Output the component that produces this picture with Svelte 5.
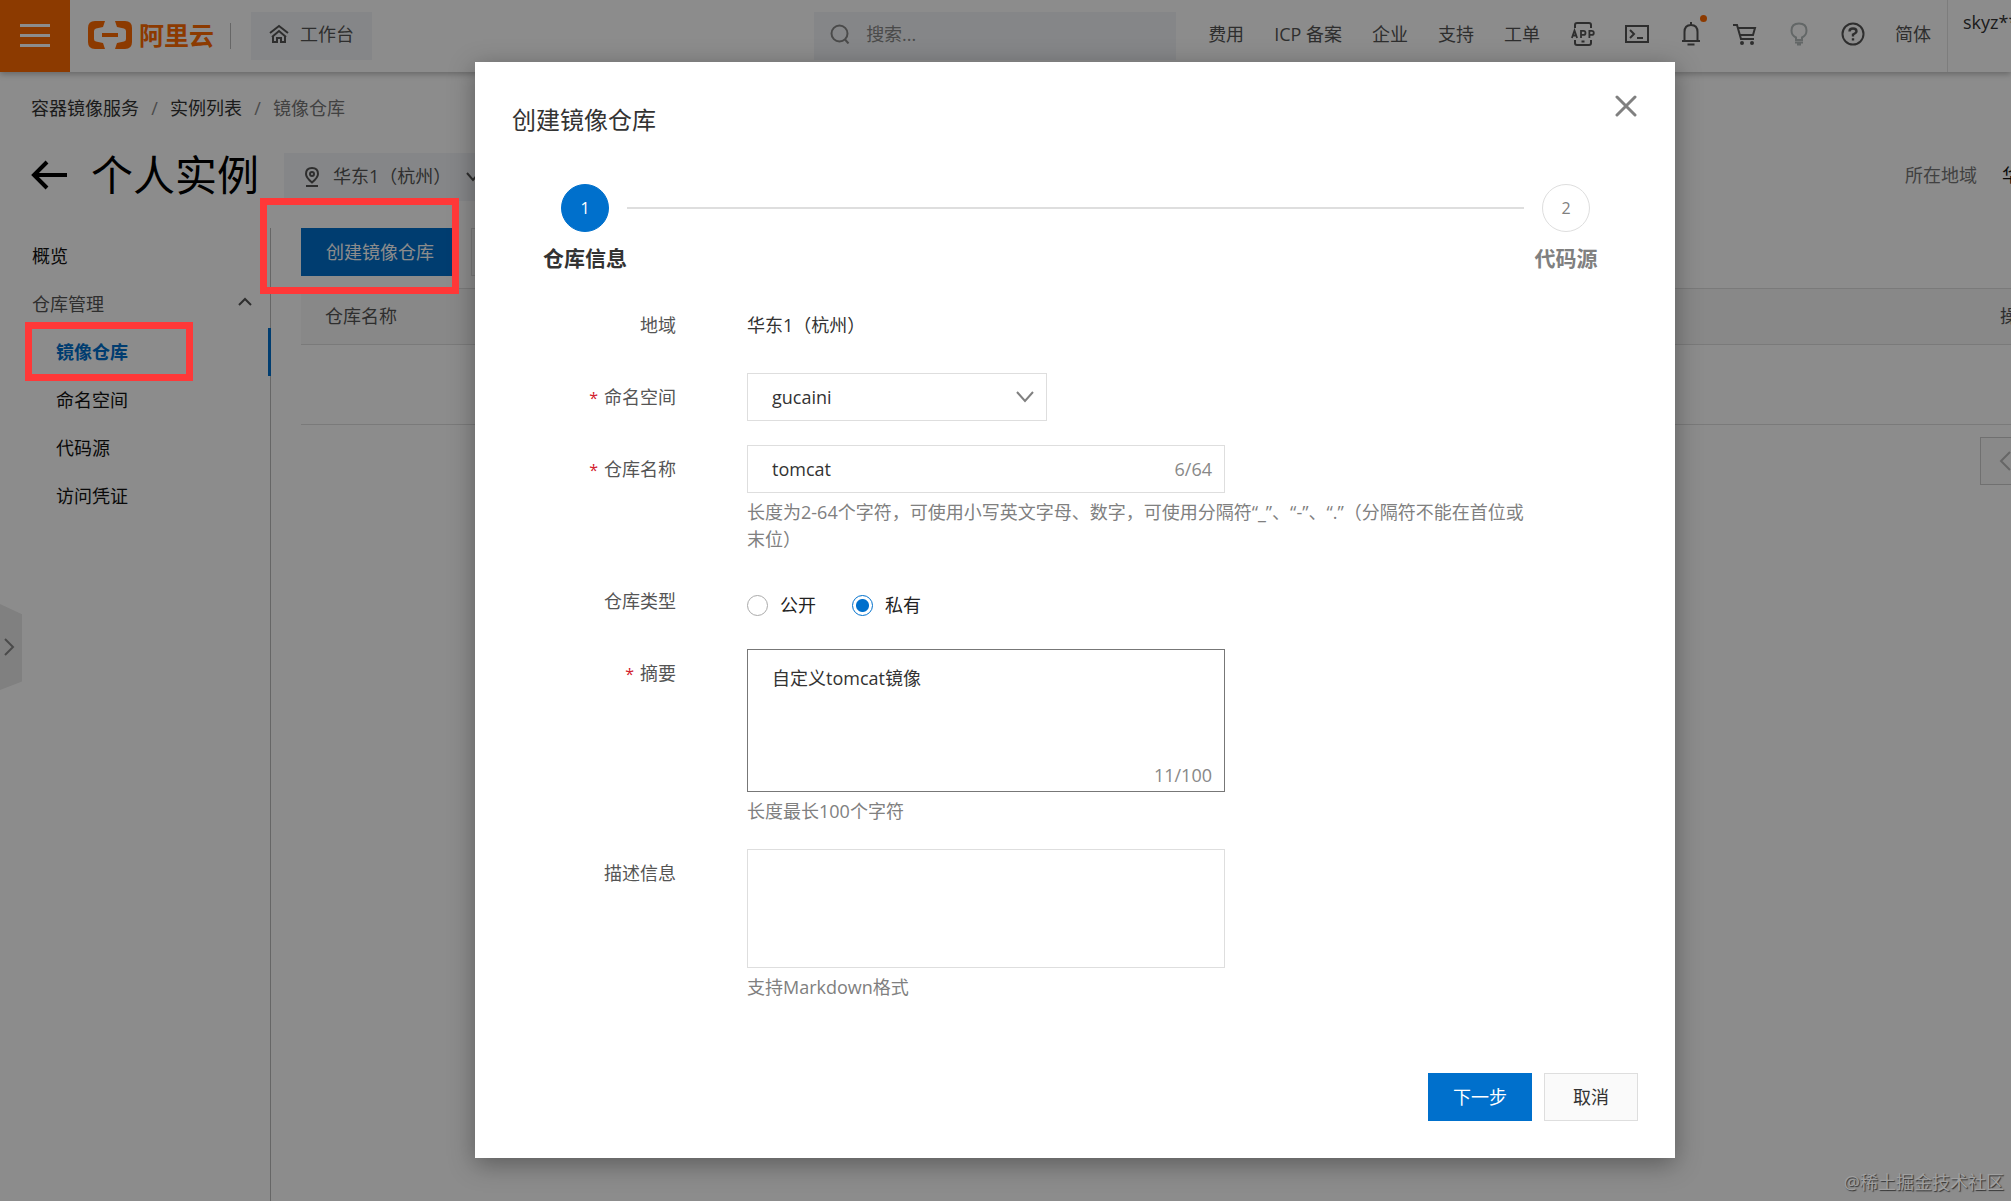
<script lang="ts">
  let namespace = $state('gucaini');
  let repoName = $state('tomcat');
  let repoType = $state('private');
  let summary = $state('自定义tomcat镜像');
  let description = $state('');

  const topLinks = ['费用', 'ICP 备案', '企业', '支持', '工单'];
  const subMenu = ['镜像仓库', '命名空间', '代码源', '访问凭证'];
</script>

<div class="screen">
  <header class="topbar">
    <button class="menu" aria-label="菜单"><i></i><i></i><i></i></button>
    <a class="logo" href="#home">
      <svg width="44" height="28" viewBox="0 0 44 28" fill="currentColor" aria-hidden="true">
        <path d="M17 0H7Q0 0 0 7V21Q0 28 7 28H17L15 22L8 20.500Q6 20 6 18V10Q6 8 8 7.500L15 6Z" />
        <path d="M27 0H37Q44 0 44 7V21Q44 28 37 28H27L29 22L36 20.500Q38 20 38 18V10Q38 8 36 7.500L29 6Z" />
        <rect x="14" y="12" width="16" height="4" />
      </svg>
      <span>阿里云</span>
    </a>
    <span class="bar"></span>
    <button class="workbench">
      <svg width="20" height="20" viewBox="0 0 20 20" fill="none" stroke="currentColor" stroke-width="2" aria-hidden="true">
        <path d="M1 9L10 2L19 9" /><path d="M3 13L10 7L17 13" /><path d="M4 12V18H8V14H12V18H16V12" />
      </svg>
      工作台
    </button>
    <label class="search">
      <svg width="20" height="20" viewBox="0 0 20 20" fill="none" stroke="currentColor" stroke-width="2" aria-hidden="true">
        <circle cx="9.500" cy="9.500" r="8" /><path d="M15 15.500L18.500 19.500" />
      </svg>
      <input type="search" placeholder="搜索..." aria-label="搜索" />
    </label>
    <nav class="toplinks">
      {#each topLinks as link}
        <a href="#{link}">{link}</a>
      {/each}
    </nav>
    <div class="tools">
      <button aria-label="APP">
        <svg width="24" height="26" viewBox="0 0 24 26" fill="none" stroke="currentColor" stroke-width="2">
          <path d="M4 7V4Q4 2 6 2H18Q20 2 20 4V7M4 19V22Q4 24 6 24H18Q20 24 20 22V19M10.500 20.500H13.500" />
          <path stroke-width="1.800" d="M0.900 17L3.500 9.500L6.100 17M2 14.500H5M10 17V9.900H12.500Q14.500 9.900 14.500 11.900T12.500 13.900H10M18.400 17V9.900H20.600Q22.800 9.900 22.800 11.900T20.600 13.900H18.400" />
        </svg>
      </button>
      <button aria-label="Cloud Shell">
        <svg width="24" height="26" viewBox="0 0 24 26" fill="none" stroke="currentColor" stroke-width="2">
          <rect x="1" y="5" width="22" height="16" /><path d="M5 9L9 13L5 17M12 17H18" />
        </svg>
      </button>
      <button class="bell" aria-label="消息">
        <svg width="24" height="26" viewBox="0 0 24 26" fill="none" stroke="currentColor" stroke-width="2">
          <path d="M12 1V4M3 20H21M5.500 19V11Q5.500 4 12 4T18.500 11V19M8.500 23.500H15.500" />
        </svg>
        <span class="dot"></span>
      </button>
      <button aria-label="购物车">
        <svg width="24" height="26" viewBox="0 0 24 26" fill="none" stroke="currentColor" stroke-width="2">
          <path d="M0 4H4L8 18H21M5 7H22L20 14H7" />
          <circle cx="9" cy="22" r="1" /><circle cx="19" cy="22" r="1" />
        </svg>
      </button>
      <button class="bulb" aria-label="提示">
        <svg width="24" height="26" viewBox="0 0 24 26" fill="none" stroke="currentColor" stroke-width="2">
          <path d="M9 19V16.500Q4.500 14.500 4.500 9.500Q4.500 2.500 12 2.500T19.500 9.500Q19.500 14.500 15 16.500V19ZM8 21.500H16M10 23.500H14" />
        </svg>
      </button>
      <button aria-label="帮助">
        <svg width="24" height="26" viewBox="0 0 24 26" fill="none" stroke="currentColor" stroke-width="2">
          <circle cx="12" cy="13" r="10.500" /><path stroke-width="2.400" d="M8.500 10.500Q8.500 7.500 12 7.500T15.500 10.300Q15.500 12 12 13.500V15.500M12 17.200V19.600" />
        </svg>
      </button>
    </div>
    <a class="lang" href="#lang">简体</a>
    <div class="user">skyz**</div>
  </header>

  <nav class="crumbs" aria-label="面包屑">
    <a href="#acr">容器镜像服务</a><span>/</span><a href="#list">实例列表</a><span>/</span><em>镜像仓库</em>
  </nav>

  <div class="heading">
    <a class="back" href="#back" aria-label="返回">
      <svg width="36" height="30" viewBox="0 0 36 30" fill="none" stroke="currentColor" stroke-width="4"><path d="M36 15H3M16 2L3 15L16 28" /></svg>
    </a>
    <h1>个人实例</h1>
    <button class="region">
      <svg width="16" height="20" viewBox="0 0 16 20" fill="none" stroke="currentColor" stroke-width="2" aria-hidden="true">
        <path d="M8 15.500Q2 10.500 2 7Q2 1 8 1T14 7Q14 10.500 8 15.500ZM2 19H14" /><circle cx="8" cy="7" r="2" />
      </svg>
      <span>华东1（杭州）</span>
      <svg width="14" height="10" viewBox="0 0 14 10" fill="none" stroke="currentColor" stroke-width="2" aria-hidden="true"><path d="M1 1L7 8L13 1" /></svg>
    </button>
    <dl class="where"><dt>所在地域</dt><dd>华东1（杭州）</dd></dl>
  </div>

  <div class="body">
    <nav class="side">
      <a href="#overview">概览</a>
      <button class="group">
        仓库管理
        <svg width="14" height="14" viewBox="0 0 14 14" fill="none" stroke="currentColor" stroke-width="2" aria-hidden="true"><path d="M1 8L7 2L13 8" /></svg>
      </button>
      {#each subMenu as item, i}
        <a class="sub" class:active={i === 0} href="#{item}">{item}</a>
      {/each}
    </nav>
    <main class="content">
      <div class="actions">
        <button class="primary">创建镜像仓库</button>
        <button class="plain" aria-label="刷新"></button>
      </div>
      <table>
        <thead><tr><th>仓库名称</th><th class="ops">操作</th></tr></thead>
        <tbody><tr><td colspan="2"></td></tr></tbody>
      </table>
      <div class="pager">
        <button aria-label="上一页">
          <svg width="12" height="20" viewBox="0 0 12 20" fill="none" stroke="currentColor" stroke-width="2"><path d="M11 1L2 10L11 19" /></svg>
        </button>
      </div>
    </main>
  </div>

  <button class="handle" aria-label="展开">
    <svg width="12" height="18" viewBox="0 0 12 18" fill="none" stroke="currentColor" stroke-width="2"><path d="M2 1L10 9L2 17" /></svg>
  </button>

  <div class="mask">
    <div class="dialog" role="dialog" aria-modal="true" aria-labelledby="dlg-title">
      <div class="dlg-head">
        <h2 id="dlg-title">创建镜像仓库</h2>
        <button class="close" aria-label="关闭">
          <svg width="22" height="22" viewBox="0 0 22 22" fill="none" stroke="currentColor" stroke-width="3" stroke-linecap="round"><path d="M2 2L20 20M20 2L2 20" /></svg>
        </button>
      </div>

      <ol class="steps">
        <li class="step current"><span class="num">1</span><strong>仓库信息</strong></li>
        <li class="line" aria-hidden="true"></li>
        <li class="step"><span class="num">2</span><strong>代码源</strong></li>
      </ol>

      <form>
        <div class="row">
          <span class="label">地域</span>
          <div class="static">华东1（杭州）</div>
        </div>
        <div class="row">
          <label class="label" for="ns"><b>*</b>命名空间</label>
          <div class="select">
            <select id="ns" bind:value={namespace}><option>gucaini</option></select>
            <svg width="20" height="14" viewBox="0 0 20 14" fill="none" stroke="currentColor" stroke-width="2" aria-hidden="true"><path d="M2 2L10 11L18 2" /></svg>
          </div>
        </div>
        <div class="row">
          <label class="label" for="repo"><b>*</b>仓库名称</label>
          <div>
            <div class="box">
              <input id="repo" type="text" maxlength="64" bind:value={repoName} />
              <span class="count">{repoName.length}/64</span>
            </div>
            <p class="help">长度为2-64个字符，可使用小写英文字母、数字，可使用分隔符“_”、“-”、“.”（分隔符不能在首位或末位）</p>
          </div>
        </div>
        <div class="row types">
          <span class="label" id="type-label">仓库类型</span>
          <div class="radios" role="radiogroup" aria-labelledby="type-label">
            <label><input type="radio" name="type" value="public" bind:group={repoType} />公开</label>
            <label><input type="radio" name="type" value="private" bind:group={repoType} />私有</label>
          </div>
        </div>
        <div class="row">
          <label class="label" for="sum"><b>*</b>摘要</label>
          <div>
            <div class="box tall focus">
              <textarea id="sum" maxlength="100" bind:value={summary}></textarea>
              <span class="count">{summary.length}/100</span>
            </div>
            <p class="help">长度最长100个字符</p>
          </div>
        </div>
        <div class="row">
          <label class="label" for="desc">描述信息</label>
          <div>
            <div class="box desc"><textarea id="desc" bind:value={description}></textarea></div>
            <p class="help">支持Markdown格式</p>
          </div>
        </div>
      </form>

      <div class="dlg-foot">
        <button class="primary">下一步</button>
        <button class="plain">取消</button>
      </div>
    </div>
  </div>

  <div class="mark mark-create"></div>
  <div class="mark mark-menu"></div>
  <div class="watermark">@稀土掘金技术社区</div>
</div>

<style>
  :global(body) { margin: 0; }
  .screen {
    position: relative;
    min-height: 100vh;
    display: flex;
    flex-direction: column;
    overflow: hidden;
    background: #fff;
    color: #111;
    font: 400 18px/27px "Open Sans", "Noto Sans CJK SC", sans-serif;
    text-spacing-trim: space-all;
  }
  .screen *, .screen *::before { box-sizing: border-box; }
  button, input, select, textarea { font: inherit; color: inherit; margin: 0; padding: 0; border: 0; background: none; outline: 0; border-radius: 0; }
  a { color: inherit; text-decoration: none; }
  svg { display: block; flex: none; }

  .topbar { display: flex; align-items: center; height: 72px; color: #555; box-shadow: 0 2px 6px rgba(0, 0, 0, 0.28); white-space: nowrap; }
  .menu { width: 70px; height: 72px; padding-bottom: 2px; background: #ff6a00; display: flex; flex-direction: column; align-items: center; justify-content: center; gap: 7px; }
  .menu i { width: 30px; height: 3px; background: #fff; }
  .logo { display: flex; align-items: center; gap: 7px; margin-left: 18px; padding-bottom: 2px; color: #ff6a00; font-size: 25px; font-weight: 700; }
  .bar { width: 1px; height: 26px; margin: 0 20px 0 16px; background: #bbb; }
  .workbench { display: flex; align-items: center; gap: 11px; height: 48px; padding: 0 18px 4px; background: #f3f5f7; color: #555; }
  .search { display: flex; align-items: center; gap: 16px; width: 362px; height: 48px; margin-left: auto; padding: 0 16px 4px; background: #f3f5f7; color: #888; }
  .search input { width: 100%; }
  .search input::placeholder { color: #888; opacity: 1; }
  .toplinks { display: flex; gap: 30px; margin-left: 32px; padding-bottom: 4px; }
  .tools { display: flex; gap: 30px; margin-left: 31px; padding-bottom: 4px; }
  .bell { position: relative; }
  .dot { position: absolute; top: -6px; right: -4px; width: 7px; height: 7px; border-radius: 50%; background: #ff6a00; }
  .bulb { color: #b4bcbc; }
  .lang { margin-left: 30px; padding-bottom: 4px; }
  .user { width: 64px; height: 72px; margin-left: 16px; padding: 9px 0 0 15px; border-left: 1px solid #e3e3e3; color: #333; overflow: hidden; }

  .crumbs { display: flex; margin: 23px 0 0 31px; color: #333; }
  .crumbs span { width: 31px; text-align: center; color: #888; }
  .crumbs em { font-style: normal; color: #777; }
  .heading { display: flex; align-items: center; height: 52px; margin-top: 27px; padding-left: 31px; white-space: nowrap; }
  .back { color: #000; }
  h1 { margin: 0 25px 0 24px; font-size: 42px; line-height: 52px; font-weight: 400; color: #000; }
  .region { display: flex; align-items: center; gap: 13px; height: 48px; margin-top: 3px; padding: 0 20px; background: #f3f5f7; color: #555; }
  .region span { width: 120px; text-align: left; }
  .where { display: flex; width: 106px; margin: 0 0 0 auto; overflow: hidden; }
  .where dt { flex: none; width: 97px; color: #777; }
  .where dd { flex: none; margin: 0; }

  .body { display: flex; flex: 1; margin-top: 27px; }
  .side { flex: none; width: 271px; padding-top: 4px; border-right: 1px solid #bbb; display: flex; flex-direction: column; }
  .side a, .group { display: flex; align-items: center; flex: none; height: 48px; padding-left: 32px; }
  .group { justify-content: space-between; padding-right: 18px; color: #555; }
  .side .sub { padding-left: 56px; }
  .side .active { margin-right: -1px; border-right: 3px solid #0070cc; color: #0070cc; font-weight: 700; }
  .content { flex: 1; padding-left: 30px; }
  .actions { display: flex; gap: 12px; height: 48px; margin-bottom: 12px; }
  .primary { height: 48px; padding: 0 25px; background: #0070cc; color: #fff; }
  .plain { height: 48px; padding: 0 28px; border: 1px solid #dedede; background: #fafafa; color: #333; }
  table { width: 100%; border-collapse: collapse; }
  th { height: 56px; padding: 0 24px; border: solid #dedede; border-width: 1px 0; background: #f7f7f7; text-align: left; font-weight: 400; color: #555; }
  .ops { width: 11px; max-width: 11px; padding: 0; overflow: hidden; white-space: nowrap; }
  td { height: 80px; border-bottom: 1px solid #dedede; }
  .pager { display: flex; justify-content: flex-end; margin-top: 12px; overflow: hidden; }
  .pager button { width: 31px; height: 48px; padding-left: 18px; border: 1px solid #ccc; border-right: 0; background: #fafafa; color: #bbb; }

  .handle { position: absolute; left: 0; top: 604px; width: 22px; height: 86px; padding-left: 3px; background: #e9e9e9; color: #888; clip-path: polygon(0 0, 100% 12%, 100% 90%, 0 100%); }

  .mask { position: absolute; inset: 0; display: flex; justify-content: center; align-items: flex-start; padding: 62px 0 0 139px; background: rgba(0, 0, 0, 0.45); }
  .dialog { width: 1200px; padding: 0 37px 37px; background: #fff; color: #333; box-shadow: 0 6px 24px rgba(0, 0, 0, 0.35); }
  .dlg-head { display: flex; justify-content: space-between; padding-top: 33px; }
  h2 { margin: 7px 0 1px; font-size: 24px; line-height: 36px; font-weight: 400; }
  .close { align-self: flex-start; height: 22px; margin-right: 1px; color: #808080; }
  .steps { display: flex; margin: 45px 0 0; padding: 0 14px 0 15px; list-style: none; }
  .step { flex: none; width: 116px; display: flex; flex-direction: column; align-items: center; color: #808080; font-size: 21px; line-height: 32px; }
  .num { width: 48px; height: 48px; border: 1px solid #dedede; border-radius: 50%; text-align: center; font-size: 16px; line-height: 46px; margin-bottom: 10px; }
  .current { color: #333; }
  .current .num { border-color: #0070cc; background: #0070cc; color: #fff; }
  .line { flex: 1; height: 2px; margin: 23px -16px; background: #dedede; }

  form { margin-top: 27px; padding: 0 108px 0 0; }
  .row { display: grid; grid-template-columns: 164px 1fr; column-gap: 71px; margin-bottom: 24px; }
  .label { padding-top: 11px; text-align: right; color: #555; white-space: nowrap; height: 48px; }
  .label b { margin-right: 6px; font-size: 16px; font-weight: 400; color: #d2202c; }
  .static { padding-top: 11px; }
  .select { position: relative; width: 300px; height: 48px; }
  .select select { width: 100%; height: 48px; padding: 0 24px; border: 1px solid #dedede; background: #fff; appearance: none; }
  .select svg { position: absolute; right: 12px; top: 17px; color: #808080; pointer-events: none; }
  .box { position: relative; display: flex; width: 478px; height: 48px; border: 1px solid #dedede; }
  .box input, .box textarea { flex: 1; min-width: 0; padding: 0 24px; resize: none; }
  .box textarea { padding-top: 15px; }
  .tall { height: 143px; }
  .desc { height: 119px; }
  .focus { border-color: #777; }
  .count { position: absolute; right: 12px; bottom: 2px; color: #888; }
  .box:not(.tall) .count { bottom: 9px; }
  .help { margin: 6px 0 0; color: #808080; }
  .types { margin-top: 22px; }
  .radios { display: flex; gap: 36px; height: 48px; padding-top: 9px; align-items: center; color: #222; }
  .radios label { display: flex; align-items: center; gap: 12px; }
  .radios input { appearance: none; width: 21px; height: 21px; border: 1px solid #aaa; border-radius: 50%; }
  .radios input:checked { border-color: #0070cc; background: radial-gradient(circle, #0070cc 6px, #fff 7px); }
  .dlg-foot { display: flex; justify-content: flex-end; gap: 12px; margin-top: 72px; }

  .mark { position: absolute; border: 7px solid #ff3838; }
  .mark-create { left: 260px; top: 198px; width: 199px; height: 96px; }
  .mark-menu { left: 25px; top: 322px; width: 168px; height: 59px; }
  .watermark { position: absolute; right: 7px; bottom: 5px; color: #a0a0a0; text-shadow: 1px 1px 1px #333; }
</style>
